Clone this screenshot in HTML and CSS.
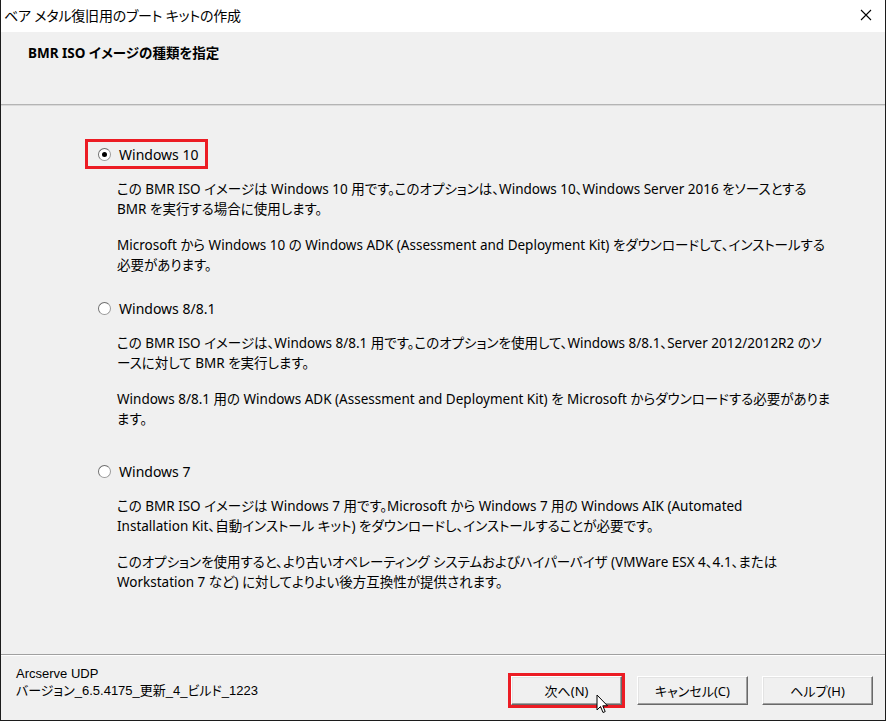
FILE: index.html
```html
<!DOCTYPE html>
<html>
    <head>
        <meta charset="utf-8" />
        <title>ベア メタル復旧用のブート キットの作成</title>
        <link rel="stylesheet" href="styles.css">
    </head>
    <body>
        <div class="window">
            <div class="titlebar">
                <span class="title">ベア メタル復旧用のブート キットの作成</span>
                <svg class="close" width="12" height="12" viewBox="0 0 12 12">
                    <path d="M1 1 L11 11 M11 1 L1 11" stroke="#000" stroke-width="1.1" fill="none" />
                </svg>
            </div>
            <div class="header">
                <h1>BMR ISO イメージの種類を指定</h1>
            </div>

            <div class="content">
                <div class="option first">
                    <label class="choice marked"><span class="radio checked"></span>Windows 10</label>
                    <div class="desc">
                        <p>この BMR ISO イメージは Windows 10 用です。このオプションは、Windows 10、Windows Server 2016 をソースとする<br>BMR を実行する場合に使用します。</p>
                        <p>Microsoft から Windows 10 の Windows ADK (Assessment and Deployment Kit) をダウンロードして、インストールする<br>必要があります。</p>
                    </div>
                </div>
                <div class="option second">
                    <label class="choice"><span class="radio"></span>Windows 8/8.1</label>
                    <div class="desc">
                        <p>この BMR ISO イメージは、Windows 8/8.1 用です。このオプションを使用して、Windows 8/8.1、Server 2012/2012R2 のソ<br>ースに対して BMR を実行します。</p>
                        <p>Windows 8/8.1 用の Windows ADK (Assessment and Deployment Kit) を Microsoft からダウンロードする必要がありま<br>ます。</p>
                    </div>
                </div>
                <div class="option third">
                    <label class="choice"><span class="radio"></span>Windows 7</label>
                    <div class="desc">
                        <p>この BMR ISO イメージは Windows 7 用です。Microsoft から Windows 7 用の Windows AIK (Automated<br>Installation Kit、自動インストール キット) をダウンロードし、インストールすることが必要です。</p>
                        <p>このオプションを使用すると、より古いオペレーティング システムおよびハイパーバイザ (VMWare ESX 4、4.1、または<br>Workstation 7 など) に対してよりよい後方互換性が提供されます。</p>
                    </div>
                </div>
            </div>

            <div class="footer">
                <div class="product">Arcserve UDP<br>バージョン_6.5.4175_更新_4_ビルド_1223</div>
                <div class="buttons">
                    <span class="marked-btn"><button>次へ(N)</button></span>
                    <button>キャンセル(C)</button>
                    <button>ヘルプ(H)</button>
                </div>
            </div>

            <!-- mouse pointer over the next button -->
            <svg class="cursor" width="14" height="22" viewBox="0 0 14 22">
                <path d="M1 1 L1 16 L4.5 12.5 L7 18.5 L9.2 17.6 L6.8 11.8 L11.5 11.8 Z" fill="#fff" stroke="#000" stroke-width="1" stroke-linejoin="round" />
            </svg>
        </div>
    </body>
</html>
```

FILE: styles.css
```css
html, body { margin: 0; padding: 0; background: #fff; }
body {
    font-family: "Noto Sans", "Noto Sans CJK JP", sans-serif;
    font-feature-settings: "palt";
    color: #000;
}

.window {
    position: relative;
    box-sizing: border-box;
    width: 886px;
    height: 721px;
    border-left: 1px solid #1c1c1c;
    border-right: 1px solid #1c1c1c;
    border-bottom: 1px solid #1c1c1c;
    background: #f0f0f0;
    display: flex;
    flex-direction: column;
}

.titlebar {
    height: 32px;
    box-sizing: border-box;
    background: #fff;
    display: flex;
    align-items: center;
    justify-content: space-between;
    padding: 0 13px 2px 3px;
}
.title {
    font-size: 14px;
    letter-spacing: -0.2px;
}

.header {
    height: 72px;
    padding: 0 0 0 27px;
    border-bottom: 1px solid #b4b4b4;
    box-shadow: 0 1px 0 #dadada;
}
.header h1 {
    margin: 0;
    padding-top: 11px;
    font-size: 13.5px;
    font-weight: bold;
    line-height: 20px;
}

.content {
    flex: 1;
    padding: 1px 0 0 84px;
}

.option.first { margin-top: 33px; }
.option.second { margin-top: 18px; }
.option.third { margin-top: 27px; }

.choice {
    box-sizing: border-box;
    width: 123px;
    height: 30px;
    border: 3px solid transparent;
    display: flex;
    align-items: center;
    padding-left: 10px;
    font-size: 14px;
    white-space: nowrap;
}
.choice.marked { border-color: #ec1c24; }

.radio {
    box-sizing: border-box;
    flex: none;
    width: 13px;
    height: 13px;
    margin-right: 8px;
    border-radius: 50%;
    border: 1px solid #9a9a9a;
    border-top-color: #6e6e6e;
    border-left-color: #6e6e6e;
    background: #fff;
    position: relative;
}
.radio.checked:after {
    content: "";
    position: absolute;
    left: 3px;
    top: 3px;
    width: 5px;
    height: 5px;
    border-radius: 50%;
    background: #000;
}

.desc {
    margin: 10px 0 0 32px;
    font-size: 13.5px;
    line-height: 20px;
}
.desc p { margin: 0 0 16px 0; }
.desc p:last-child { margin-bottom: 0; }

.footer {
    height: 65px;
    border-top: 1px solid #a0a0a0;
    box-shadow: inset 0 1px 0 #fff;
    display: flex;
    justify-content: space-between;
    padding: 0 12px 0 15px;
}
.product {
    font-family: "Liberation Sans", "Noto Sans CJK JP", sans-serif;
    font-feature-settings: "palt";
    font-size: 13px;
    line-height: 17px;
    padding-top: 10px;
}

.buttons {
    display: flex;
    align-items: flex-start;
    padding-top: 18px;
}
.buttons button {
    box-sizing: border-box;
    width: 111px;
    height: 29px;
    margin: 3px 0 0 14px;
    font-family: "Noto Sans", "Noto Sans CJK JP", sans-serif;
    font-feature-settings: "palt";
    font-size: 13px;
    color: #000;
    background: #f0f0f0;
    border: 1px solid;
    border-color: #fff #696969 #696969 #fff;
    box-shadow: inset -1px -1px 0 #a0a0a0, inset 1px 1px 0 #e3e3e3;
    padding: 0;
}
.marked-btn {
    border: 3px solid #ec1c24;
    display: flex;
}
.marked-btn button { margin: 0; }
.marked-btn + button { margin-left: 12px; }

.cursor {
    position: absolute;
    left: 595px;
    top: 694px;
}
```
